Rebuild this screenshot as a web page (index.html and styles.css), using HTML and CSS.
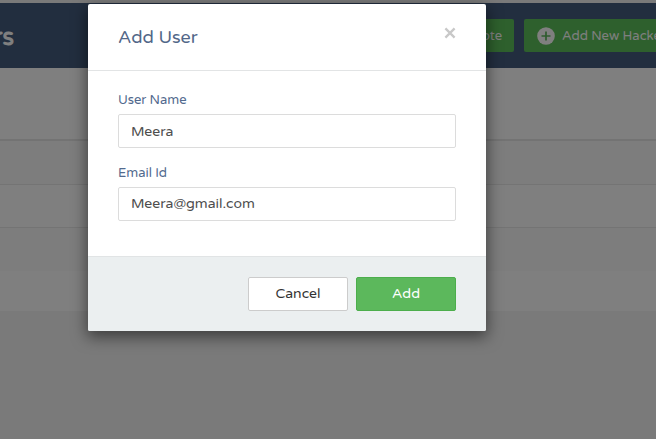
FILE: index.html
```html
<!DOCTYPE html>
<html lang="en">
<head>
<meta charset="utf-8">
<title>Add User</title>
<link rel="stylesheet" href="styles.css">
</head>
<body>
<div class="page">
  <header class="topbar">
    <h1 class="page-title">Hackers</h1>
    <div class="actions">
      <button class="action action-promote">Promote</button>
      <button class="action action-new">
        <svg class="plus" viewBox="0 0 18 18" width="18" height="18"><circle cx="9" cy="9" r="8.8" fill="#fff"/><path d="M9 4.5v9M4.5 9h9" stroke="#5cb85c" stroke-width="1.7"/></svg>
        Add New Hacker
      </button>
    </div>
  </header>
  <main class="table">
    <div class="row row-head"></div>
    <div class="row row-odd"></div>
    <div class="row row-even"></div>
    <div class="row row-last"></div>
    <div class="row row-foot"></div>
  </main>
</div>
<div class="backdrop">
  <section class="modal">
    <header class="modal-header">
      <h2 class="modal-title">Add User</h2>
      <svg class="close" viewBox="0 0 12 12" width="12" height="12"><path d="M1.4 1.4l9.2 9.2M10.6 1.4l-9.2 9.2" stroke="#c8c8c8" stroke-width="2.3"/></svg>
    </header>
    <div class="modal-body">
      <label class="label">User Name</label>
      <div class="field">Meera</div>
      <label class="label">Email Id</label>
      <div class="field field-email">Meera@gmail.com</div>
    </div>
    <footer class="modal-footer">
      <button class="btn btn-cancel">Cancel</button>
      <button class="btn btn-add">Add</button>
    </footer>
  </section>
</div>
</body>
</html>
```
FILE: styles.css
```css
* { box-sizing: border-box; }
body {
  margin: 0;
  height: 439px;
  overflow: hidden;
  background: #f4f4f4;
  font-family: "Varela Round", Varela, "Noto Sans", sans-serif;
  font-size: 13px;
}
button { font: inherit; padding: 0; }
h1, h2 { margin: 0; font-weight: 400; }

.page { width: 656px; height: 439px; overflow: hidden; padding-top: 3px; }
.topbar {
  display: flex;
  justify-content: space-between;
  height: 65px;
  background: #445c7e;
}
.page-title {
  width: 14px;
  display: flex;
  justify-content: flex-end;
  color: #fff;
  font-size: 24px;
  font-weight: 700;
  line-height: 69px;
  white-space: nowrap;
}
.actions { display: flex; gap: 10px; padding-top: 16px; margin-right: -24px; }
.action {
  display: flex;
  align-items: center;
  height: 33px;
  border: 0;
  border-radius: 2px;
  background: #5cc05a;
  color: #fff;
  white-space: nowrap;
}
.action-promote { width: 106px; justify-content: flex-end; padding-right: 12px; }
.action-new { width: 156px; padding-left: 13px; gap: 7px; }
.plus { flex: none; }

.row { border-bottom: 1px solid #e8e8e8; }
.row-head { height: 73px; background: #fff; border-bottom: 2px solid #e6e6e6; }
.row-odd { height: 44px; background: #fbfbfb; }
.row-even { height: 43px; background: #fff; }
.row-last { height: 43px; background: #fafafa; border: 0; }
.row-foot { height: 40px; background: #fff; border: 0; }

.backdrop { position: absolute; inset: 0; overflow: hidden; background: rgba(0, 0, 0, .5); }
.modal {
  width: 398px;
  height: 327px;
  margin: 4px 0 0 88px;
  border-radius: 2px;
  overflow: hidden;
  background: #fff;
  box-shadow: 0 5px 15px 1px rgba(0, 0, 0, .5);
}
.modal-header {
  display: flex;
  justify-content: space-between;
  height: 67px;
  padding: 0 30px;
  border-bottom: 1px solid #e2e4e5;
}
.modal-title { color: #526788; font-size: 18px; line-height: 66px; }
.close { margin-top: 23px; }
.modal-body { height: 185px; padding: 18px 30px 0; }
.label { display: block; height: 25px; line-height: 22px; color: #526a8e; }
.field {
  height: 34px;
  margin-bottom: 14px;
  padding-left: 12px;
  border: 1px solid #dcdcdc;
  border-radius: 2px;
  color: #4d4d4d;
  font-size: 14px;
  line-height: 34px;
}
.field-email { line-height: 32px; }
.modal-footer {
  display: flex;
  justify-content: flex-end;
  gap: 8px;
  height: 75px;
  padding: 20px 30px 0;
  border-top: 1px solid #e1e4e5;
  background: #ebeff0;
}
.btn { width: 100px; height: 34px; border-radius: 2px; font-size: 14px; line-height: 32px; }
.btn-cancel { border: 1px solid #ccc; background: #fff; color: #333; }
.btn-add { border: 1px solid #4cae4c; background: #5cb85c; color: #fff; }
```
